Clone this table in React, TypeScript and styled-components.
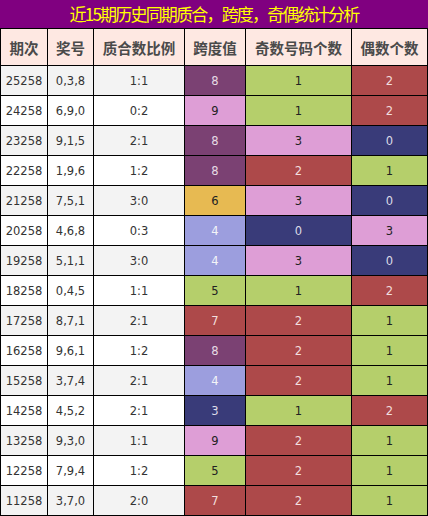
import React from "react";
import styled, { createGlobalStyle } from "styled-components";

const GlobalStyle = createGlobalStyle`
  html, body { margin: 0; padding: 0; background: #fff; }
  body { font-family: "DejaVu Sans", "Noto Sans CJK SC", sans-serif; }
`;

const Wrap = styled.div`
  width: 428px;
  display: flex;
  flex-direction: column;
`;

const Title = styled.div`
  height: 28px;
  background: #800080;
  color: #ffff00;
  font-family: "Noto Sans CJK SC", sans-serif;
  font-size: 17px;
  letter-spacing: -1.8px;
  line-height: 28px;
  text-align: center;
  white-space: nowrap;
`;

const Grid = styled.div`
  display: grid;
  grid-template-columns: 46px 45px 90px 60px 105px 75px;
  grid-template-rows: 36px;
  grid-auto-rows: 29px;
  gap: 1px;
  padding: 1px;
  background: #000;
`;

const HeadCell = styled.div`
  background: #fee8e2;
  color: #4a4a4a;
  font-family: "Noto Sans CJK SC", sans-serif;
  font-weight: 700;
  font-size: 14.5px;
  display: flex;
  align-items: center;
  justify-content: center;
  white-space: nowrap;
`;

const Cell = styled.div<{ $alt: boolean }>`
  background: ${(p) => (p.$alt ? "#f3f3f3" : "#ffffff")};
  color: #333;
  font-size: 11.5px;
  display: flex;
  align-items: center;
  justify-content: center;
`;

const ColorCell = styled.div<{ $bg: string; $fg: string }>`
  background: ${(p) => p.$bg};
  color: ${(p) => p.$fg};
  font-size: 11.5px;
  display: flex;
  align-items: center;
  justify-content: center;
`;

const palette: Record<string, [string, string]> = {
  purple: ["#7b4173", "#e6dbe4"],
  pink: ["#de9ed6", "#222"],
  yellow: ["#e7ba52", "#222"],
  peri: ["#9c9ede", "#f4f4f8"],
  green: ["#b5cf6b", "#222"],
  red: ["#ad494a", "#f2dede"],
  navy: ["#393b79", "#dcdce8"],
};

const spanColor: Record<number, string> = {
  8: "purple",
  9: "pink",
  6: "yellow",
  4: "peri",
  5: "green",
  7: "red",
  3: "navy",
};

const countColor: Record<number, string> = {
  0: "navy",
  1: "green",
  2: "red",
  3: "pink",
};

const rows: [string, string, string, number, number, number][] = [
  ["25258", "0,3,8", "1:1", 8, 1, 2],
  ["24258", "6,9,0", "0:2", 9, 1, 2],
  ["23258", "9,1,5", "2:1", 8, 3, 0],
  ["22258", "1,9,6", "1:2", 8, 2, 1],
  ["21258", "7,5,1", "3:0", 6, 3, 0],
  ["20258", "4,6,8", "0:3", 4, 0, 3],
  ["19258", "5,1,1", "3:0", 4, 3, 0],
  ["18258", "0,4,5", "1:1", 5, 1, 2],
  ["17258", "8,7,1", "2:1", 7, 2, 1],
  ["16258", "9,6,1", "1:2", 8, 2, 1],
  ["15258", "3,7,4", "2:1", 4, 2, 1],
  ["14258", "4,5,2", "2:1", 3, 1, 2],
  ["13258", "9,3,0", "1:1", 9, 2, 1],
  ["12258", "7,9,4", "1:2", 5, 2, 1],
  ["11258", "3,7,0", "2:0", 7, 2, 1],
];

const headers = ["期次", "奖号", "质合数比例", "跨度值", "奇数号码个数", "偶数个数"];

function Colored({ name, value }: { name: string; value: number }) {
  const [bg, fg] = palette[name];
  return (
    <ColorCell $bg={bg} $fg={fg}>
      {value}
    </ColorCell>
  );
}

export default function App() {
  return (
    <Wrap>
      <GlobalStyle />
      <Title>近15期历史同期质合，跨度，奇偶统计分析</Title>
      <Grid>
        {headers.map((h) => (
          <HeadCell key={h}>{h}</HeadCell>
        ))}
        {rows.map((r, i) => {
          const alt = i % 2 === 0;
          return (
            <React.Fragment key={r[0]}>
              <Cell $alt={alt}>{r[0]}</Cell>
              <Cell $alt={alt}>{r[1]}</Cell>
              <Cell $alt={alt}>{r[2]}</Cell>
              <Colored name={spanColor[r[3]]} value={r[3]} />
              <Colored name={countColor[r[4]]} value={r[4]} />
              <Colored name={countColor[r[5]]} value={r[5]} />
            </React.Fragment>
          );
        })}
      </Grid>
    </Wrap>
  );
}
